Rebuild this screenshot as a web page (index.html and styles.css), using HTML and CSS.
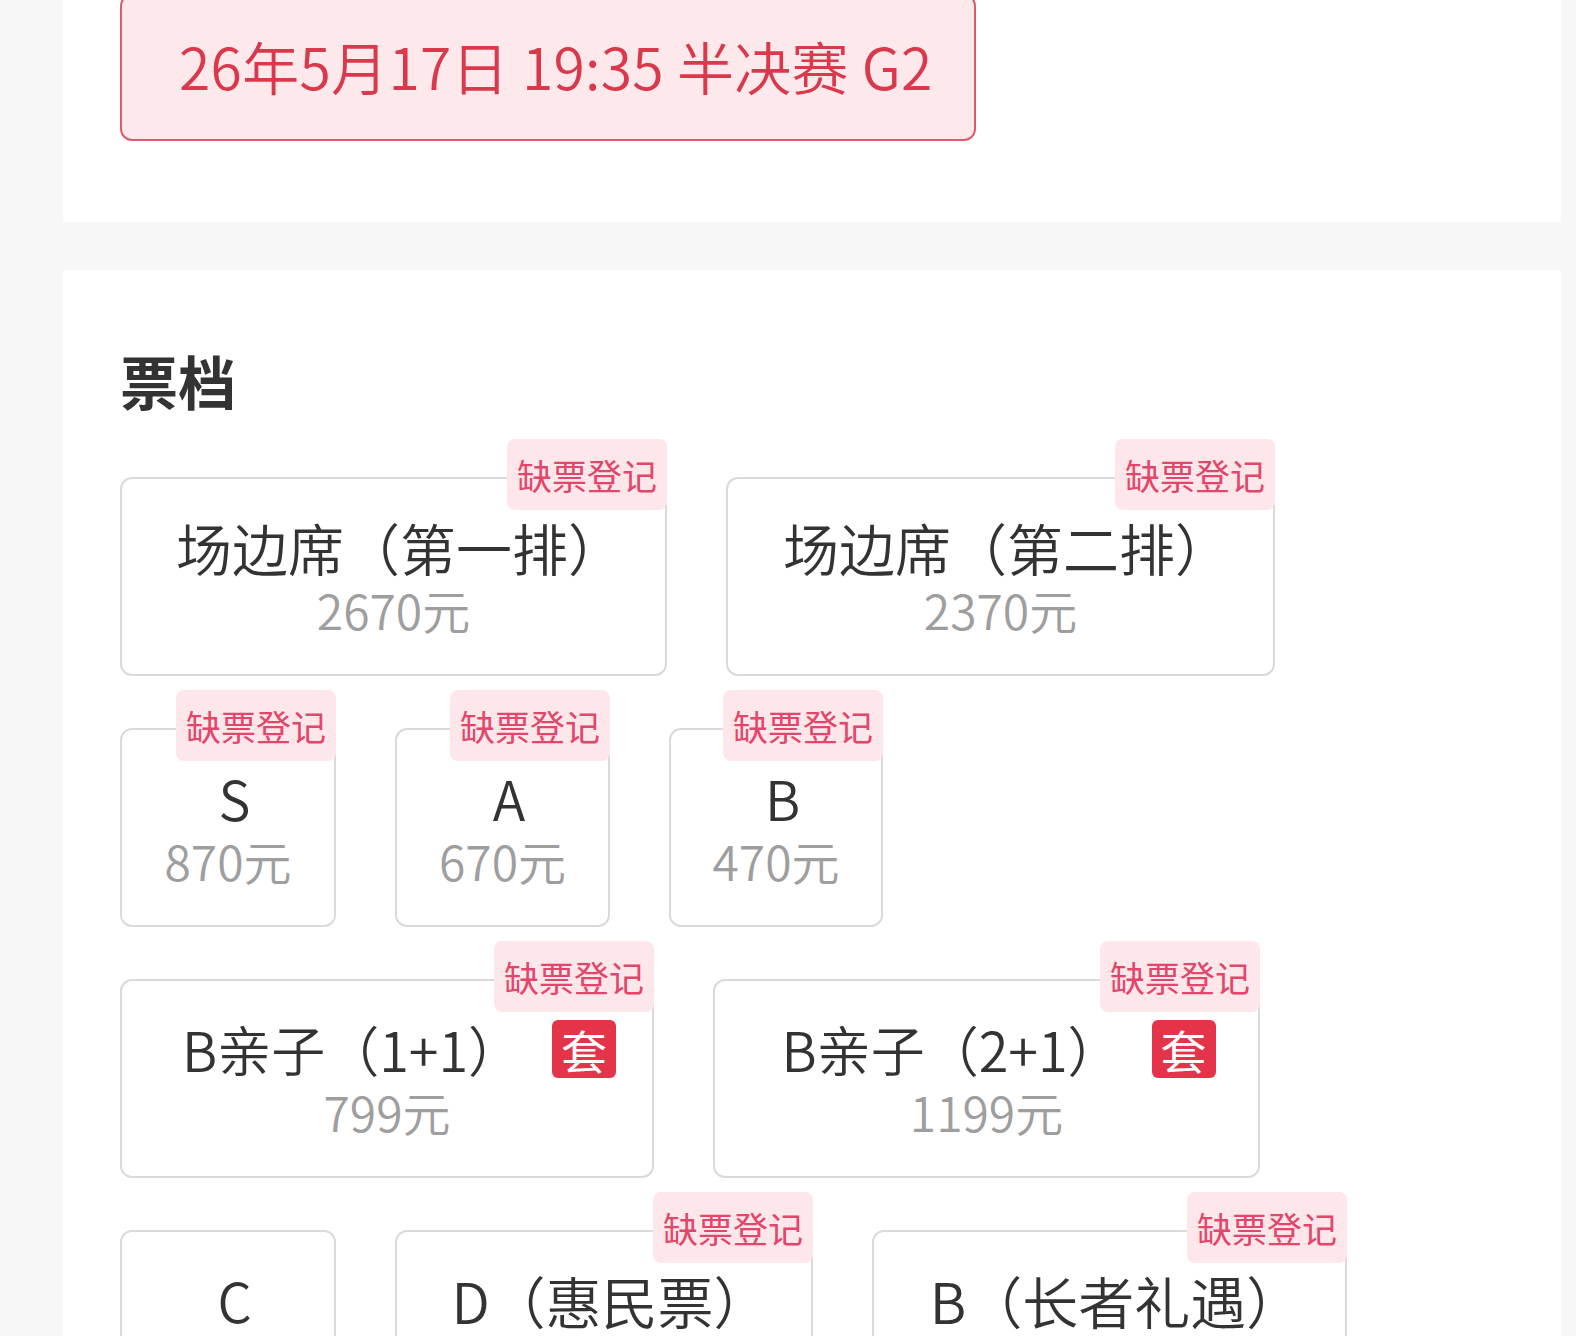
FILE: index.html
```html
<!DOCTYPE html>
<html lang="zh-CN">
<head>
<meta charset="utf-8">
<title>票档</title>
<link rel="stylesheet" href="styles.css">
</head>
<body>
<div class="page">
  <section class="sec sec-top">
    <div class="date-box">26年5月17日 19:35 半决赛 G2</div>
  </section>
  <section class="sec sec-tiers">
    <h2 class="sec-title">票档</h2>
    <div class="tiers">
      <div class="tier w-547"><span class="badge">缺票登记</span><div class="tier-head"><span class="tier-name name-lg">场边席（第一排）</span></div><div class="tier-price">2670元</div></div>
      <div class="tier w-549"><span class="badge">缺票登记</span><div class="tier-head"><span class="tier-name name-lg">场边席（第二排）</span></div><div class="tier-price">2370元</div></div>
      <div class="tier w-216"><span class="badge">缺票登记</span><div class="tier-head"><span class="tier-name">S</span></div><div class="tier-price">870元</div></div>
      <div class="tier w-215"><span class="badge">缺票登记</span><div class="tier-head"><span class="tier-name">A</span></div><div class="tier-price">670元</div></div>
      <div class="tier w-214"><span class="badge">缺票登记</span><div class="tier-head"><span class="tier-name">B</span></div><div class="tier-price">470元</div></div>
      <div class="tier w-534"><span class="badge">缺票登记</span><div class="tier-head has-tao"><span class="tier-name">B亲子（1+1）</span><span class="tao">套</span></div><div class="tier-price">799元</div></div>
      <div class="tier w-547"><span class="badge">缺票登记</span><div class="tier-head has-tao"><span class="tier-name">B亲子（2+1）</span><span class="tao">套</span></div><div class="tier-price">1199元</div></div>
      <div class="tier w-216"><div class="tier-head"><span class="tier-name">C</span></div><div class="tier-price">370元</div></div>
      <div class="tier w-418"><span class="badge">缺票登记</span><div class="tier-head"><span class="tier-name name-lg">D（惠民票）</span></div><div class="tier-price">170元</div></div>
      <div class="tier w-475"><span class="badge">缺票登记</span><div class="tier-head"><span class="tier-name name-lg">B（长者礼遇）</span></div><div class="tier-price">235元</div></div>
    </div>
  </section>
</div>
</body>
</html>
```
FILE: styles.css
```css
html, body {
  overflow: hidden;
}
body {
  margin: 0;
  background: #f7f7f7;
  font-family: "Noto Sans CJK SC", "Noto Sans", sans-serif;
}
.page {
  margin-left: 63px;
  width: 1498px;
  display: flex;
  flex-direction: column;
  gap: 48px;
}
.sec {
  background: #fff;
}
.sec-top {
  height: 222px;
  box-sizing: border-box;
  padding-left: 57px;
}
.date-box {
  margin-top: -6px;
  width: 856px;
  height: 147px;
  box-sizing: border-box;
  border: 2px solid #e05a69;
  border-radius: 12px;
  background: #fde9ec;
  color: #d9394a;
  font-size: 57px;
  font-weight: 350;
  letter-spacing: 0.3px;
  line-height: 139px;
  padding: 0 0 4px 57px;
  white-space: nowrap;
}
.sec-tiers {
  padding: 76px 57px 200px;
  min-height: 1200px;
}
.sec-title {
  margin: 0;
  font-size: 58px;
  line-height: 68px;
  font-weight: 700;
  color: #333;
}
.tiers {
  margin-top: 63px;
  display: flex;
  flex-wrap: wrap;
  column-gap: 59px;
  row-gap: 52px;
  max-width: 1300px;
}
.tier {
  position: relative;
  box-sizing: border-box;
  height: 199px;
  border: 2px solid #dadada;
  border-radius: 12px;
  padding-top: 36px;
  text-align: center;
  background: #fff;
}
.w-547 { width: 547px; }
.w-549 { width: 549px; }
.w-534 { width: 534px; }
.w-418 { width: 418px; }
.w-475 { width: 475px; }
.w-216 { width: 216px; }
.w-215 { width: 215px; }
.w-214 { width: 214px; }
.tier-head {
  display: flex;
  justify-content: center;
  align-items: center;
  height: 64px;
  padding-left: 13px;
}
.tier-head.has-tao {
  padding-left: 24px;
}
.tier-name {
  font-size: 54px;
  font-weight: 350;
  line-height: 64px;
  color: #333;
  white-space: nowrap;
}
.name-lg {
  font-size: 56px;
}
.tier-price {
  margin-top: 2px;
  font-size: 48px;
  font-weight: 350;
  line-height: 56px;
  color: #9e9e9e;
}
.badge {
  position: absolute;
  top: -40px;
  right: -2px;
  height: 71px;
  padding: 0 10px;
  background: #fde7ea;
  color: #e2466a;
  font-size: 35px;
  line-height: 71px;
  border-radius: 8px;
  white-space: nowrap;
}
.tao {
  margin-left: 30px;
  width: 64px;
  height: 58px;
  border-radius: 6px;
  background: #e5334a;
  color: #fff;
  font-size: 46px;
  line-height: 58px;
  text-align: center;
}
```
